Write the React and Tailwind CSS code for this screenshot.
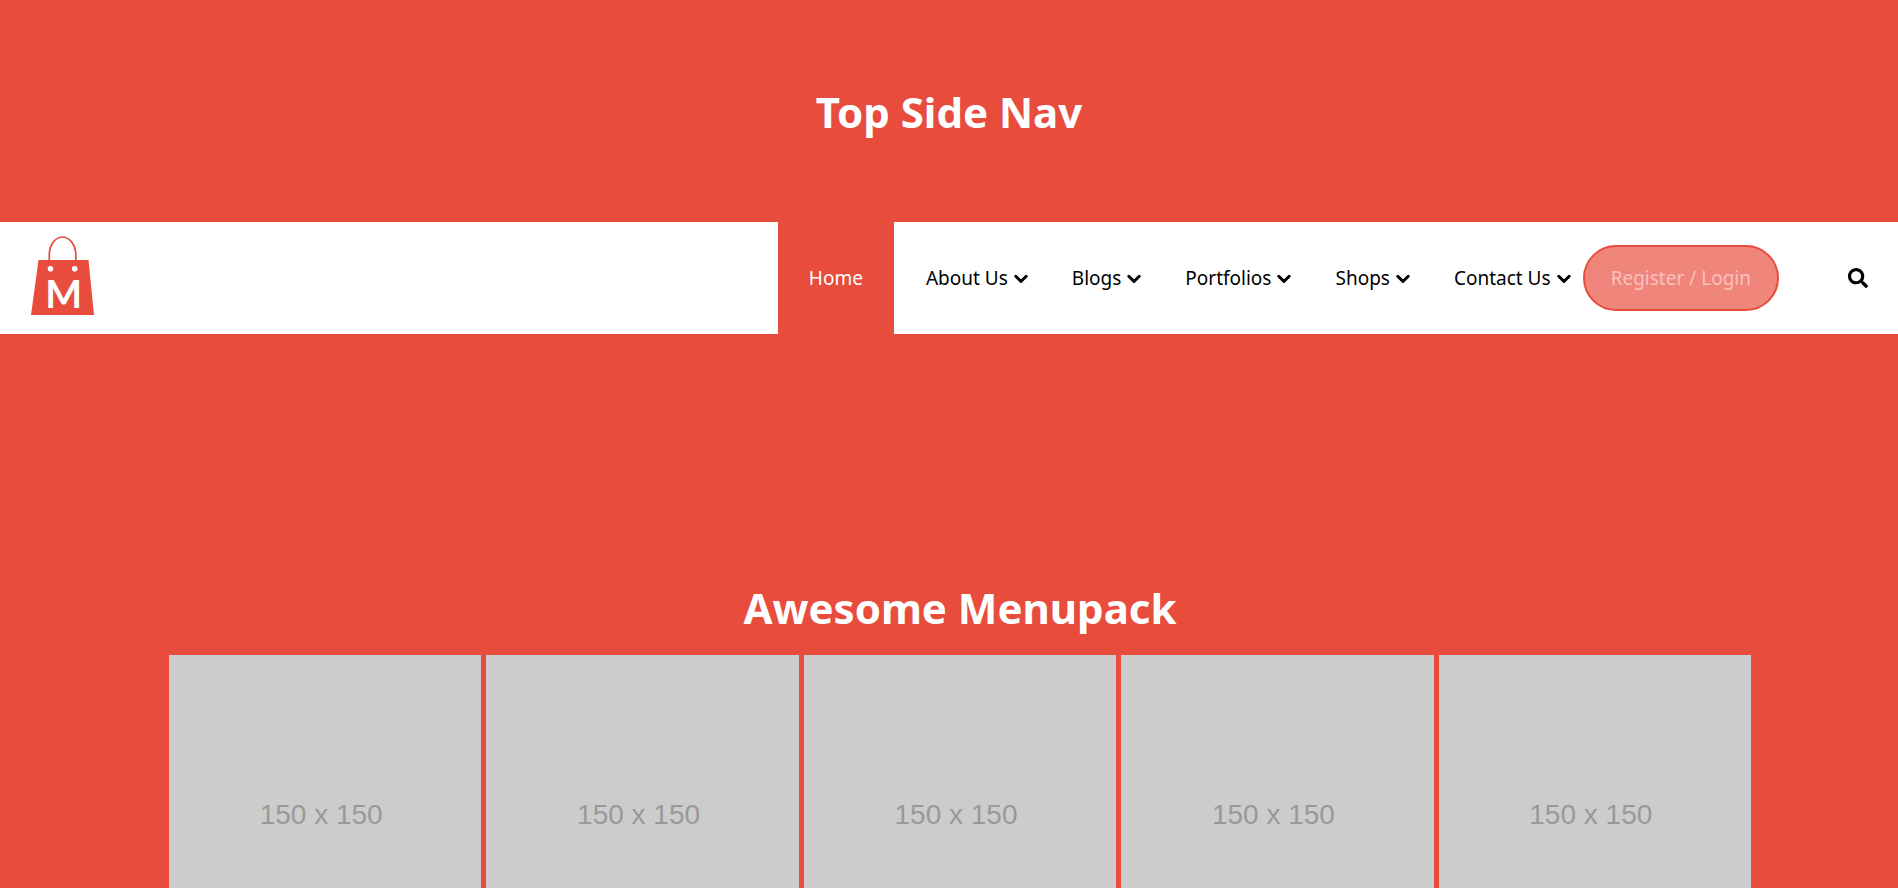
import { FaSearch } from "react-icons/fa";
import { FaChevronDown } from "react-icons/fa6";

const links = [
  { label: "About Us", href: "#about" },
  { label: "Blogs", href: "#blogs" },
  { label: "Portfolios", href: "#portfolios" },
  { label: "Shops", href: "#shops" },
  { label: "Contact Us", href: "#contact" },
];

const tiles = [1, 2, 3, 4, 5];

function Logo() {
  return (
    <svg width="64" height="80" viewBox="0 0 64 80" aria-hidden="true">
      <path d="M18.3 26V19C18.8 8 25.5 2 31.5 2S44.2 8 44.8 19V26" fill="none" stroke="#e84c3d" strokeWidth="1.7" />
      <path d="M7.5 25H57.5L63 80H0Z" fill="#e84c3d" />
      <circle cx="19.5" cy="33.8" r="2.8" fill="#fff" />
      <circle cx="43.7" cy="33.8" r="2.8" fill="#fff" />
      <text x="32.7" y="73" textAnchor="middle" className="fill-white font-['Lato',sans-serif] text-[39px] font-bold">
        M
      </text>
    </svg>
  );
}

export default function App() {
  return (
    <div className="min-h-screen bg-[#e84c3d] font-['Noto_Sans',sans-serif]">
      <header>
        <h1 className="pt-[81px] pb-[79px] text-center text-[42px] leading-[62px] font-bold text-white">
          Top Side Nav
        </h1>

        <nav className="flex h-28 items-center justify-between bg-white pr-[30px] pl-[31px] text-black">
          <a href="#top" aria-label="Menupack" className="pb-[6px]">
            <Logo />
          </a>

          <div className="flex h-full items-center text-[19px]">
            <a href="#home" className="flex h-full items-center bg-[#e84c3d] px-[31px] text-white">
              Home
            </a>
            {links.map((link) => (
              <a key={link.label} href={link.href} className="flex h-full items-center gap-[6px] pr-3 pl-8">
                {link.label}
                <FaChevronDown className="size-[14px] stroke-current stroke-[40]" />
              </a>
            ))}
            <button
              type="button"
              className="h-[66px] rounded-full border-2 border-[#e84c3d] bg-[#f0857b] px-[26px] text-[#f8c1bc]"
            >
              Register / Login
            </button>
            <button type="button" aria-label="Search" className="ml-[69px]">
              <FaSearch className="size-5" />
            </button>
          </div>
        </nav>
      </header>

      <main className="pt-[243px] pr-[147px] pl-[169px]">
        <h2 className="pb-4 text-center text-[42px] leading-[62px] font-bold text-white">Awesome Menupack</h2>
        <div className="grid grid-cols-5 gap-[5px]">
          {tiles.map((tile) => (
            <div
              key={tile}
              className="flex aspect-square items-center justify-center bg-[#ccc] pt-2 pr-2 font-['Liberation_Sans',sans-serif] text-[28px] text-[#999]"
            >
              150 x 150
            </div>
          ))}
        </div>
      </main>
    </div>
  );
}
